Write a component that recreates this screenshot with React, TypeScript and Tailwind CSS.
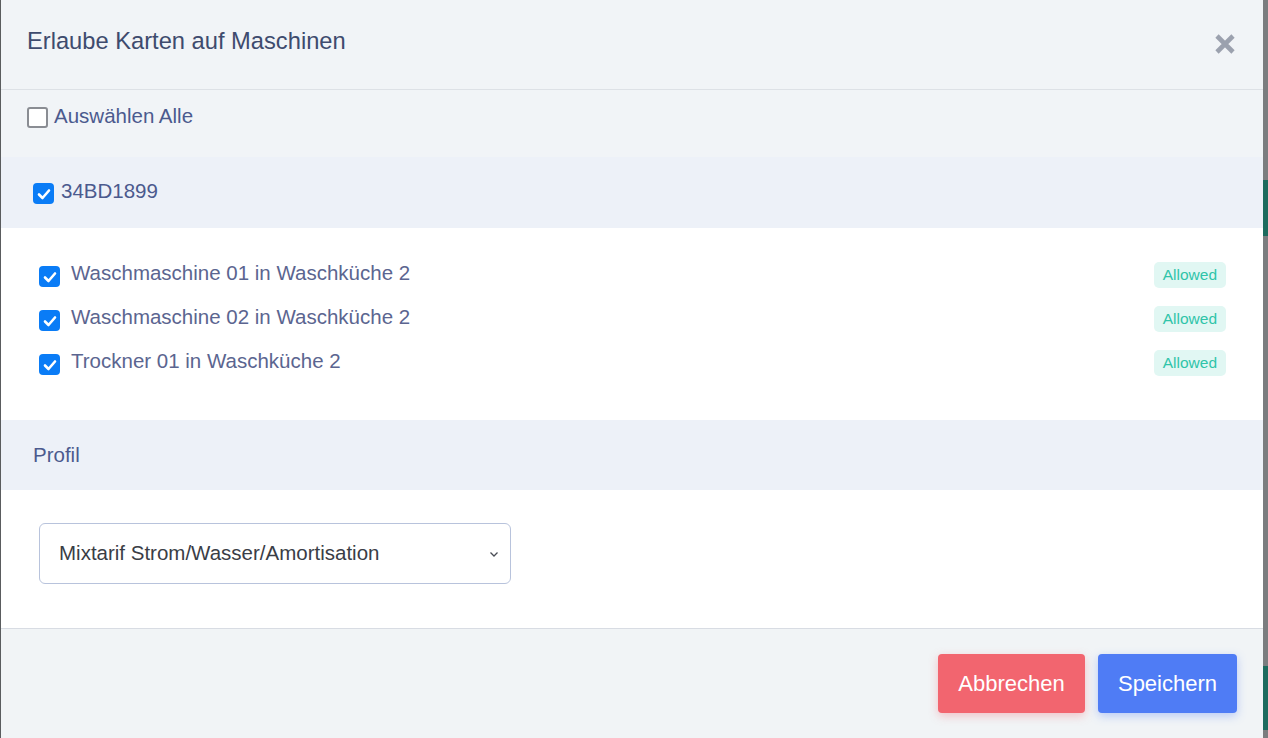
import React from "react";

function Check({ checked }: { checked: boolean }) {
  if (!checked) {
    return (
      <span className="inline-block w-[21px] h-[21px] rounded-[3px] border-[2.5px] border-[#8a8d93] bg-white shrink-0" />
    );
  }
  return (
    <span className="inline-flex items-center justify-center w-[21px] h-[21px] rounded-[4px] bg-[#0a7cf6] shrink-0">
      <svg width="14" height="12" viewBox="0 0 14 12">
        <path d="M2 6.5 L5.5 10 L12 2.5" stroke="white" strokeWidth="2.6" fill="none" strokeLinecap="round" strokeLinejoin="round" />
      </svg>
    </span>
  );
}

const machines = [
  "Waschmaschine 01 in Waschküche 2",
  "Waschmaschine 02 in Waschküche 2",
  "Trockner 01 in Waschküche 2",
];

export default function App() {
  return (
    <div className="w-[1268px] h-[738px] flex bg-[#7b7d7f] overflow-hidden" style={{ fontFamily: '"Liberation Sans", Arial, sans-serif' }}>
      <div className="w-[1px] bg-[#5a5c5e]" />
      <div className="w-[1262px] flex flex-col bg-white">
        <div className="h-[90px] bg-[#f1f4f7] border-b border-[#dde1e6] flex items-center justify-between pl-[26px] pr-[26px]">
          <div className="text-[23.7px] text-[#3e4b6e] -mt-[5px]">Erlaube Karten auf Maschinen</div>
          <svg width="24" height="24" viewBox="0 0 24 24" className="-mt-[2px]">
            <path d="M4 4 L20 20 M20 4 L4 20" stroke="#9ba1ae" strokeWidth="4.6" strokeLinecap="butt" />
          </svg>
        </div>
        <div className="h-[67px] bg-[#f1f4f7] flex items-start pt-[17px] pl-[26px]">
          <div className="flex items-center gap-[6px]">
            <Check checked={false} />
            <span className="text-[20.5px] text-[#4b5a8e] leading-[24px] -mt-[4px]">Auswählen Alle</span>
          </div>
        </div>
        <div className="h-[71px] bg-[#edf1f8] flex items-center pl-[32px] pt-[2px]">
          <div className="flex items-center gap-[7px]">
            <Check checked={true} />
            <span className="text-[20.5px] text-[#4b5a8e] leading-[24px] -mt-[5px]">34BD1899</span>
          </div>
        </div>
        <div className="h-[192px] bg-white flex flex-col pt-[36px] pl-[38px] pr-[37px] gap-[22px]">
          {machines.map((m) => (
            <div key={m} className="flex items-center justify-between h-[22px]">
              <div className="flex items-center gap-[11px]">
                <span className="mt-[5px]"><Check checked={true} /></span>
                <span className="text-[20.5px] leading-[24px] text-[#5b6590] -mt-[4px]">{m}</span>
              </div>
              <span className="bg-[#e1f7f3] text-[#2fc4a9] text-[15.5px] rounded-[5px] px-[9px] h-[26px] flex items-center">Allowed</span>
            </div>
          ))}
        </div>
        <div className="h-[70px] bg-[#edf1f8] flex items-center pl-[32px]">
          <span className="text-[20.5px] text-[#4b5a8e]">Profil</span>
        </div>
        <div className="h-[139px] bg-white border-b border-[#d8dce3] pl-[38px] pt-[33px]">
          <div className="w-[472px] h-[61px] border border-[#b8c3dc] rounded-[6px] flex items-center justify-between pl-[19px] pr-[11px]">
            <span className="text-[20.5px] text-[#3a3d46]">Mixtarif Strom/Wasser/Amortisation</span>
            <svg width="10" height="8" viewBox="0 0 10 8">
              <path d="M1.5 2.5 L5 6 L8.5 2.5" stroke="#4a4d55" strokeWidth="1.3" fill="none" />
            </svg>
          </div>
        </div>
        <div className="flex-1 bg-[#f1f4f6] flex items-start justify-end pt-[25px] pr-[26px] gap-[13px]">
          <button className="w-[147px] h-[59px] rounded-[4px] bg-[#f2656f] text-white text-[22px] shadow-[0_3px_10px_rgba(242,101,111,0.35)]">Abbrechen</button>
          <button className="w-[139px] h-[59px] rounded-[4px] bg-[#4f7cf5] text-white text-[22px] shadow-[0_3px_10px_rgba(79,124,245,0.35)]">Speichern</button>
        </div>
      </div>
      <div className="flex-1 flex flex-col bg-[#7b7d7f]">
        <div className="h-[180px]" />
        <div className="h-[56px] bg-[#1d6b5e]" />
        <div className="flex-1" />
        <div className="h-[64px] bg-[#1d6b5e] mb-[8px]" />
      </div>
    </div>
  );
}
